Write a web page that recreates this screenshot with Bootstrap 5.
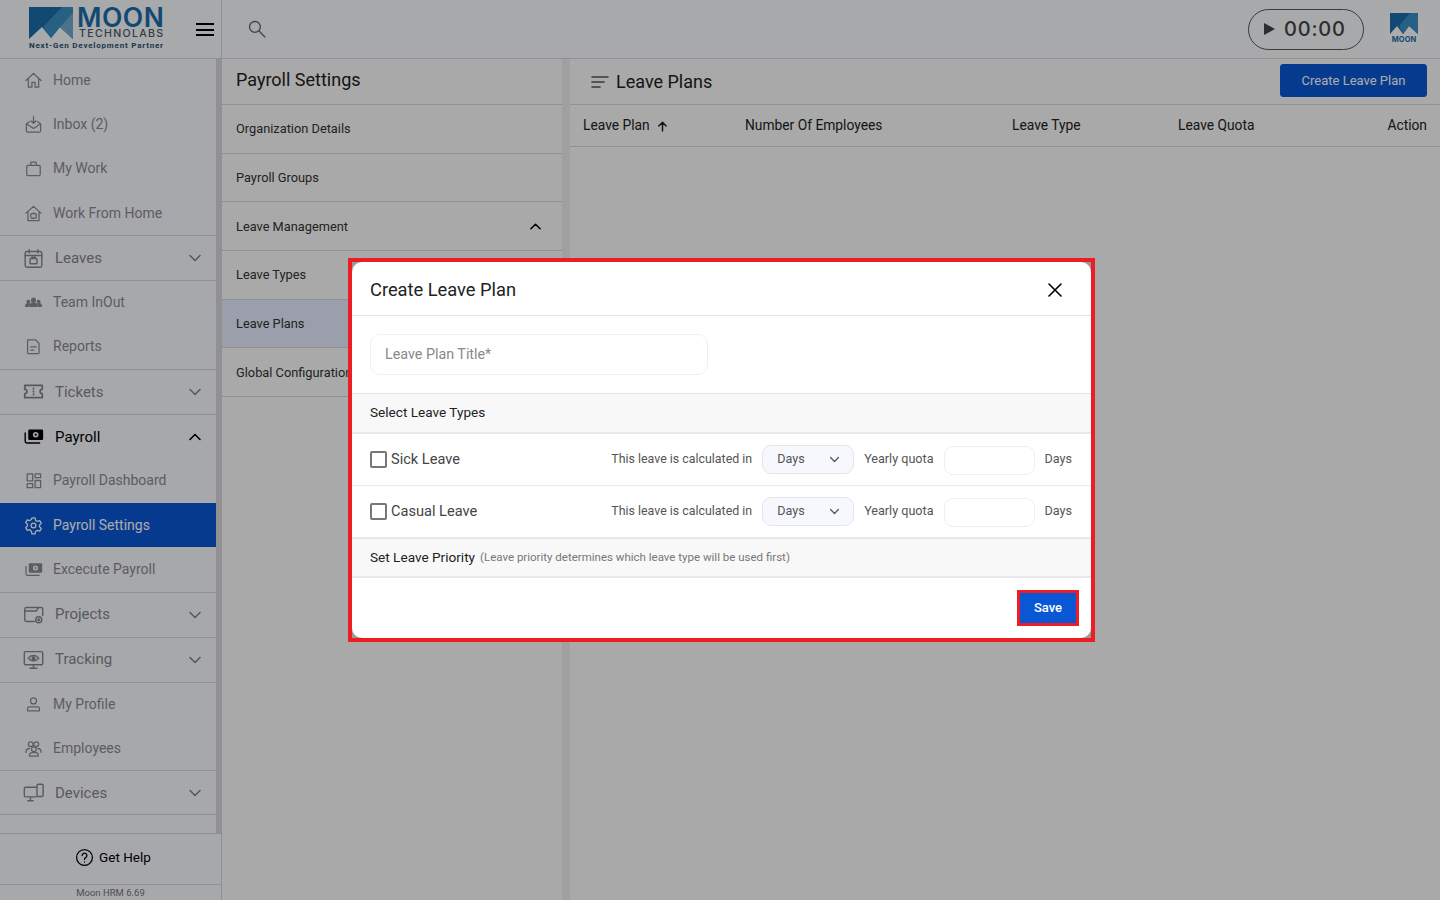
<!DOCTYPE html>
<html lang="en"><head><meta charset="utf-8"><title>Create Leave Plan</title>
<link href="https://cdn.jsdelivr.net/npm/bootstrap@5.3.0/dist/css/bootstrap.min.css" rel="stylesheet">
<style>
html,body{height:100%;overflow:hidden}
body{font-family:Roboto,"Liberation Sans",sans-serif;background:#fcfcfc;color:#222}
svg.ic{fill:none;stroke:currentColor;stroke-width:1.6;stroke-linecap:round;stroke-linejoin:round;flex:none}
.app-top{height:59px;background:#fbfcff;border-bottom:1px solid #d6d7db}
.brand-box{width:222px;border-right:1px solid #d6d7db;padding:7px 7px 0 29px}
.logo-words{line-height:1;margin-left:4px;color:#1c6eac}
.logo-moon{font:600 26.500px/20px Inter,sans-serif;letter-spacing:.5px;height:20px}
.logo-tech{font:500 10.600px/10px Inter,sans-serif;letter-spacing:1.300px;color:#4b5a68;margin-top:2px;margin-left:2px}
.logo-tag{font:700 8px/10px Roboto,sans-serif;letter-spacing:.8px;color:#2c5370;margin-top:2px;white-space:nowrap}
.burger{width:18px;height:13px;border-top:2px solid #000;border-bottom:2px solid #000;margin-left:auto;margin-top:16px}
.burger::after{content:"";display:block;height:2px;background:#000;margin-top:3.500px}
.top-search{margin-left:25px;color:#666}
.timer-pill{width:116px;height:41px;border:1.500px solid #555;border-radius:21px;font:500 20px/1 Inter,sans-serif;letter-spacing:.8px;color:#444;gap:9px;padding-left:15px}
.tri{width:0;height:0;border-left:11px solid #444;border-top:6.500px solid transparent;border-bottom:6.500px solid transparent}
.avatar-disc{width:40px;height:40px;border-radius:50%;background:#fff;margin:0 16px 0 20px}
.page-row{height:841px}
.side-col{width:222px;background:#f9fbff;border-right:1px solid #d6d7db}
.side-scroll{height:774px;border-right:5px solid #d8d9dc;overflow:hidden;position:relative}
.side-thumb{position:absolute;right:-5px;top:0;width:5px;height:609px;background:#c9cacc}
.side-item{height:44.300px;padding-left:24px;gap:10px;font-size:14px;color:#8a8b90;white-space:nowrap}
.side-item.side-first{height:43.300px}
.side-item svg{width:19px;height:19px}
.side-group{height:45px;border-top:1px solid #d6d7db;padding:0 14px 0 23px;gap:11px;font-size:15px;color:#85868a}
.side-group svg.ic:first-child{width:21px;height:21px}
.side-group.closer{border-bottom:1px solid #d6d7db}
.side-group .chev{width:14px;height:14px;margin-left:auto}
.item-after{border-top:1px solid #d6d7db}
.side-on{background:#0a57d6;color:#fff}
.side-dark{color:#000}
.side-foot{border-top:1px solid #d6d7db;height:51px;font-size:13.500px;color:#000;gap:5px;padding:0 0 4px 5px}
.side-ver{border-top:1px solid #d6d7db;height:16px;font-size:9.500px;line-height:16px;color:#777;text-align:center}
.settings-col{width:340px;background:#fcfcfc}
.col-gutter{width:8px;background:#efefef}
.col-head{height:46px;border-bottom:1px solid #d9d9d9;font-size:18px;color:#222;padding:0 0 4px 14px}
.set-item{height:48.700px;border-bottom:1px solid #d9d9d9;padding:0 20px 0 14px;font-size:12.800px;color:#333}
.set-chev{color:#000}
.set-on{background:#e6edff}
.main-col{flex:1;background:#fcfcfc}
.plans-head{height:46px;border-bottom:1px solid #d9d9d9;padding:0 13px 0 21px;font-size:18px;gap:7px;color:#222}
.plans-head svg{color:#555}
.btn-plan{--bs-btn-bg:#0a57d6;--bs-btn-color:#fff;--bs-btn-border-color:#0a57d6;--bs-btn-padding-x:0;--bs-btn-font-size:13px;width:147px;height:33px;margin:0 0 3px auto;border-radius:3px}
.plans-table{table-layout:fixed;--bs-table-bg:transparent;margin:0}
.plans-table th{font-weight:400;font-size:13.800px;height:41px;padding:0 13px;vertical-align:middle;color:#222;border-bottom:1px solid #d9d9d9}
.modal-backdrop{--bs-backdrop-opacity:.33}
.plan-dialog{--bs-modal-width:747px;margin:0 0 0 348px;min-height:100%}
.plan-frame{border:4px solid #ee1c25;border-radius:0;background:#9a9a9a;box-shadow:none}
.plan-sheet{background:#fff;border-radius:10px;overflow:hidden;color:#222}
.plan-head{height:54px;padding:2px 29px 0 18px;border-bottom:1px solid #e4e4e4;font-size:18.300px;color:#222}
.plan-x{width:14px;height:14px;margin-left:auto;color:#000}
.plan-body{height:77px;padding:18px 18px 0}
.plan-title{width:338px;height:41px;border:1px solid #efefef;border-radius:10px;font-size:14.300px;padding:0 14px 1px}
.plan-title::placeholder{color:#8a8a8a}
.plan-band{background:#f8f8f8;border-top:1px solid #e4e4e4;border-bottom:2px solid #e8e8e8;height:41px;padding:0 18px 2px;font-size:13.600px;color:#222}
.plan-row{height:52px;padding:0 19px 0 18px;border-bottom:1px solid #ebebeb;font-size:12.600px;color:#555}
.plan-note{font-size:12.400px}
.plan-check{width:17px;height:17px;border:2px solid #777;border-radius:2px;margin-right:4px}
.plan-leave{font-size:14.600px;color:#444;padding-top:1px}
.plan-pick{width:92px;height:29px;background:#f6f8fd;border:1px solid #e3e5ea;border-radius:9px;padding:0 13px 0 14px;margin:0 10px;color:#555}
.plan-pick svg{width:11px;height:11px;margin-left:auto;color:#555}
.plan-num{width:91px;height:29px;border:1px solid #eee;border-radius:9px;margin:2px 10px 0}
.plan-prior{height:40px;padding-bottom:0}
.plan-prior small{font-size:11.500px;color:#777;margin-left:5px}
.plan-foot{height:60px;padding:15px 15px 0 0;justify-content:flex-end;display:flex}
.btn-save{--bs-btn-bg:#0a57d6;--bs-btn-color:#fff;--bs-btn-border-color:#0a57d6;--bs-btn-padding-x:0;--bs-btn-padding-y:0;--bs-btn-font-size:13px;--bs-btn-border-radius:0;width:56px;height:30px;outline:3px solid #ee1c25;font-weight:500}
</style></head><body>
<svg width="0" height="0" class="d-none"><defs>
<symbol id="i-down" viewBox="0 0 14 14"><path d="M2 4.500 7 9.500 12 4.500"/></symbol>
<symbol id="i-up" viewBox="0 0 14 14"><path d="M2 9.500 7 4.500 12 9.500"/></symbol>
<symbol id="i-home" viewBox="0 0 24 24"><path d="M2.500 12 12 3l9.500 9M5.500 10v10.500h4.500v-6h4v6h4.500V10"/></symbol>
<symbol id="i-inbox" viewBox="0 0 24 24"><path d="M7 8.500 3 11v9a1.500 1.500 0 0 0 1.500 1.500h15A1.500 1.500 0 0 0 21 20v-9l-4-2.500M3 11l9 6 9-6M12 2v8M9 7.500l3 3 3-3"/></symbol>
<symbol id="i-bag" viewBox="0 0 24 24"><rect x="3.500" y="8" width="17" height="13" rx="1.500"/><path d="M8.500 8V5a1 1 0 0 1 1-1h5a1 1 0 0 1 1 1v3"/></symbol>
<symbol id="i-wfh" viewBox="0 0 24 24"><path d="M2.500 11.500 12 3l9.500 8.500M5 10v11h14V10"/><rect x="8.500" y="12" width="7" height="6" rx="2"/></symbol>
<symbol id="i-cal" viewBox="0 0 24 24"><rect x="2.500" y="4" width="19" height="18" rx="2"/><path d="M2.500 8.500h19M7 2v3.500M17 2v3.500"/><rect x="8" y="12" width="8" height="6" rx="1"/><path d="M10 12v-1.500h4V12"/></symbol>
<symbol id="i-team" viewBox="0 0 24 24"><circle cx="12" cy="9" r="2.400" fill="currentColor"/><circle cx="5.500" cy="11" r="1.700" fill="currentColor"/><circle cx="18.500" cy="11" r="1.700" fill="currentColor"/><path fill="currentColor" d="M7.500 17c0-3 2-4.500 4.500-4.500s4.500 1.500 4.500 4.500zM2 17c0-2 1.500-3.500 3.500-3.500l.8.200-.8 3.300zM22 17c0-2-1.500-3.500-3.500-3.500l-.8.200.8 3.300z"/></symbol>
<symbol id="i-doc" viewBox="0 0 24 24"><path d="M5.500 3.500h9l4.500 4.500v12a1 1 0 0 1-1 1H5.500a1 1 0 0 1-1-1V4.500a1 1 0 0 1 1-1zM8.500 12.500h7M8.500 16.500h4"/></symbol>
<symbol id="i-ticket" viewBox="0 0 24 24"><path stroke-width="2" d="M2 5h20v4.500a2.500 2.500 0 0 0 0 5V19H2v-4.500a2.500 2.500 0 0 0 0-5zM12 8.500v.500M12 11.800v.500M12 15v.500"/></symbol>
<symbol id="i-pay" viewBox="0 0 24 24"><rect x="6" y="4" width="17" height="12" rx="1.500" fill="currentColor" stroke="none"/><circle cx="14.500" cy="10" r="3.200" fill="#f9fbff" stroke="none"/><circle cx="14.500" cy="10" r="1.300" fill="currentColor" stroke="none"/><path d="M2.500 8v9.500a2 2 0 0 0 2 2H19"/></symbol>
<symbol id="i-dash" viewBox="0 0 24 24"><rect x="4" y="3.500" width="7" height="9"/><rect x="14" y="3.500" width="7" height="5"/><rect x="4" y="16" width="7" height="5"/><rect x="14" y="12" width="7" height="9"/></symbol>
<symbol id="i-gear" viewBox="0 0 24 24"><circle cx="12" cy="12" r="3"/><path d="M10 2.500h4l.6 3 2.400 1.400 2.900-1 2 3.400-2.300 2v2.400l2.300 2-2 3.400-2.900-1-2.400 1.400-.6 3h-4l-.6-3L7 17.100l-2.900 1-2-3.400 2.300-2v-2.400l-2.300-2 2-3.400 2.900 1 2.400-1.400z"/></symbol>
<symbol id="i-proj" viewBox="0 0 24 24"><path d="M13 20H4a2 2 0 0 1-2-2V6a2 2 0 0 1 2-2h17a1.500 1.500 0 0 1 1.500 1.500V13M2 8h13.500l2-4"/><circle cx="18" cy="18" r="3.500"/><circle cx="18" cy="18" r="1" fill="currentColor"/></symbol>
<symbol id="i-track" viewBox="0 0 24 24"><rect x="1.500" y="3" width="21" height="15" rx="1.500"/><path d="M8 22h8M12 18v4M6 10.500c3-4 9-4 12 0-3 4-9 4-12 0z"/><circle cx="12" cy="10.500" r="1.500" fill="currentColor"/></symbol>
<symbol id="i-user" viewBox="0 0 24 24"><circle cx="12" cy="7.500" r="3.800"/><path d="M4.500 20v-3a2 2 0 0 1 2-2h11a2 2 0 0 1 2 2v3z"/></symbol>
<symbol id="i-staff" viewBox="0 0 24 24"><circle cx="8.500" cy="6.500" r="3"/><circle cx="15.500" cy="6.500" r="3"/><circle cx="12.500" cy="13" r="3"/><path d="M2.500 17c0-3.500 2-5 4.500-5M21.500 17c0-3-1.500-5-4-5M7 21.500v-1.500c0-2 2-3 5.500-3s5.500 1 5.500 3v1.500z"/></symbol>
<symbol id="i-dev" viewBox="0 0 24 24"><path d="M15 17H3a1.500 1.500 0 0 1-1.500-1.500v-8A1.500 1.500 0 0 1 3 6h12M8.500 17v4M5.500 21.500h6"/><rect x="16" y="2.500" width="7" height="14" rx="1.500"/></symbol>
</defs></svg>

<header class="app-top d-flex align-items-center">
 <div class="brand-box d-flex align-self-stretch">
  <div>
   <div class="d-flex">
    <svg width="44" height="32" viewBox="0 0 44 32"><polygon points="0,0 44,0 44,32 31,20 22,31 13,20 0,32" fill="#1c6eac"/><polygon points="14,20 33,0 44,0 44,32 31,20 22,31" fill="#3a8fc4"/><polygon points="31,20 44,6 44,32" fill="#72abcc"/></svg>
    <div class="logo-words"><div class="logo-moon">MOON</div><div class="logo-tech">TECHNOLABS</div></div>
   </div>
   <div class="logo-tag">Next-Gen Development Partner</div>
  </div>
  <div class="burger"></div>
 </div>
 <svg class="ic top-search" width="20" height="20" viewBox="0 0 24 24" stroke-width="2.200"><circle cx="9.500" cy="9.500" r="6.500"/><path d="m14.500 14.500 7 7"/></svg>
 <div class="timer-pill d-flex align-items-center ms-auto"><span class="tri"></span>00:00</div>
 <div class="avatar-disc d-flex align-items-center justify-content-center">
  <svg width="28" height="32" viewBox="0 0 28 32"><polygon points="0,0 28,0 28,21 19,13 13,21 7,13 0,21" fill="#1c6eac"/><polygon points="9,13 20,0 28,0 28,21 19,13 13,21" fill="#3a8fc4"/><text x="14" y="28.500" text-anchor="middle" font-size="7.500" font-weight="700" font-family="Inter" fill="#1c6eac">MOON</text></svg>
 </div>
</header>

<div class="page-row d-flex">
 <aside class="side-col d-flex flex-column">
  <nav class="side-scroll">
   <div class="side-thumb"></div>
   <div class="side-item side-first d-flex align-items-center"><svg class="ic"><use href="#i-home"/></svg>Home</div>
   <div class="side-item d-flex align-items-center"><svg class="ic"><use href="#i-inbox"/></svg>Inbox (2)</div>
   <div class="side-item d-flex align-items-center"><svg class="ic"><use href="#i-bag"/></svg>My Work</div>
   <div class="side-item d-flex align-items-center"><svg class="ic"><use href="#i-wfh"/></svg>Work From Home</div>
   <div class="side-group d-flex align-items-center"><svg class="ic"><use href="#i-cal"/></svg>Leaves<svg class="ic chev"><use href="#i-down"/></svg></div>
   <div class="side-item item-after d-flex align-items-center"><svg class="ic"><use href="#i-team"/></svg>Team InOut</div>
   <div class="side-item d-flex align-items-center"><svg class="ic"><use href="#i-doc"/></svg>Reports</div>
   <div class="side-group d-flex align-items-center"><svg class="ic"><use href="#i-ticket"/></svg>Tickets<svg class="ic chev"><use href="#i-down"/></svg></div>
   <div class="side-group side-dark d-flex align-items-center"><svg class="ic"><use href="#i-pay"/></svg>Payroll<svg class="ic chev"><use href="#i-up"/></svg></div>
   <div class="side-item d-flex align-items-center"><svg class="ic"><use href="#i-dash"/></svg>Payroll Dashboard</div>
   <div class="side-item side-on d-flex align-items-center"><svg class="ic"><use href="#i-gear"/></svg>Payroll Settings</div>
   <div class="side-item d-flex align-items-center"><svg class="ic"><use href="#i-pay"/></svg>Excecute Payroll</div>
   <div class="side-group d-flex align-items-center"><svg class="ic"><use href="#i-proj"/></svg>Projects<svg class="ic chev"><use href="#i-down"/></svg></div>
   <div class="side-group d-flex align-items-center"><svg class="ic"><use href="#i-track"/></svg>Tracking<svg class="ic chev"><use href="#i-down"/></svg></div>
   <div class="side-item item-after d-flex align-items-center"><svg class="ic"><use href="#i-user"/></svg>My Profile</div>
   <div class="side-item d-flex align-items-center"><svg class="ic"><use href="#i-staff"/></svg>Employees</div>
   <div class="side-group closer d-flex align-items-center"><svg class="ic"><use href="#i-dev"/></svg>Devices<svg class="ic chev"><use href="#i-down"/></svg></div>
  </nav>
  <div class="side-foot d-flex align-items-center justify-content-center">
   <svg class="ic" width="19" height="19" viewBox="0 0 24 24" stroke-width="2"><circle cx="12" cy="12" r="10"/><path d="M9 9.500a3 3 0 1 1 4.500 2.600c-1 .6-1.500 1.200-1.500 2.400M12 17.500v.2"/></svg>Get Help
  </div>
  <div class="side-ver">Moon HRM 6.69</div>
 </aside>

 <section class="settings-col">
  <div class="col-head d-flex align-items-center">Payroll Settings</div>
  <div class="set-item d-flex align-items-center">Organization Details</div>
  <div class="set-item d-flex align-items-center">Payroll Groups</div>
  <div class="set-item d-flex align-items-center">Leave Management<svg class="ic ms-auto set-chev" width="13" height="13" stroke-width="2"><use href="#i-up"/></svg></div>
  <div class="set-item d-flex align-items-center">Leave Types</div>
  <div class="set-item set-on d-flex align-items-center">Leave Plans</div>
  <div class="set-item d-flex align-items-center">Global Configuration</div>
 </section>
 <div class="col-gutter"></div>
 <main class="main-col">
  <div class="plans-head d-flex align-items-center">
   <svg class="ic" width="18" height="14" viewBox="0 0 18 14"><path d="M1 2h16M1 7h12M1 12h8"/></svg>
   Leave Plans
   <button class="btn btn-plan">Create Leave Plan</button>
  </div>
  <table class="table plans-table">
   <colgroup><col style="width:162px"><col style="width:267px"><col style="width:166px"><col style="width:170px"><col></colgroup>
   <thead><tr><th>Leave Plan <svg class="ic ms-1" width="11" height="11" viewBox="0 0 12 12"><path d="M6 11V1.500M2 5.500l4-4 4 4"/></svg></th><th>Number Of Employees</th><th>Leave Type</th><th>Leave Quota</th><th class="text-end">Action</th></tr></thead>
  </table>
 </main>
</div>

<div class="modal-backdrop show"></div>
<div class="modal d-block" tabindex="-1">
 <div class="modal-dialog modal-dialog-centered plan-dialog">
  <div class="modal-content plan-frame">
   <div class="plan-sheet">
    <div class="plan-head d-flex align-items-center">Create Leave Plan
     <svg class="ic plan-x" viewBox="0 0 14 14" stroke-width="1.800"><path d="M1 1l12 12M13 1 1 13"/></svg></div>
    <div class="plan-body"><input class="form-control plan-title" placeholder="Leave Plan Title*"></div>
    <div class="plan-band d-flex align-items-center">Select Leave Types</div>
    <div class="plan-row d-flex align-items-center">
     <span class="plan-check"></span><span class="plan-leave">Sick Leave</span>
     <span class="ms-auto plan-note">This leave is calculated in</span>
     <span class="plan-pick d-flex align-items-center">Days<svg class="ic" viewBox="0 0 14 14"><use href="#i-down"/></svg></span>
     <span>Yearly quota</span><span class="plan-num"></span><span>Days</span>
    </div>
    <div class="plan-row d-flex align-items-center">
     <span class="plan-check"></span><span class="plan-leave">Casual Leave</span>
     <span class="ms-auto plan-note">This leave is calculated in</span>
     <span class="plan-pick d-flex align-items-center">Days<svg class="ic" viewBox="0 0 14 14"><use href="#i-down"/></svg></span>
     <span>Yearly quota</span><span class="plan-num"></span><span>Days</span>
    </div>
    <div class="plan-band plan-prior d-flex align-items-center">Set Leave Priority <small>(Leave priority determines which leave type will be used first)</small></div>
    <div class="plan-foot"><button class="btn btn-save">Save</button></div>
   </div>
  </div>
 </div>
</div>
<script src="https://cdn.jsdelivr.net/npm/bootstrap@5.3.0/dist/js/bootstrap.bundle.min.js"></script>
</body></html>
